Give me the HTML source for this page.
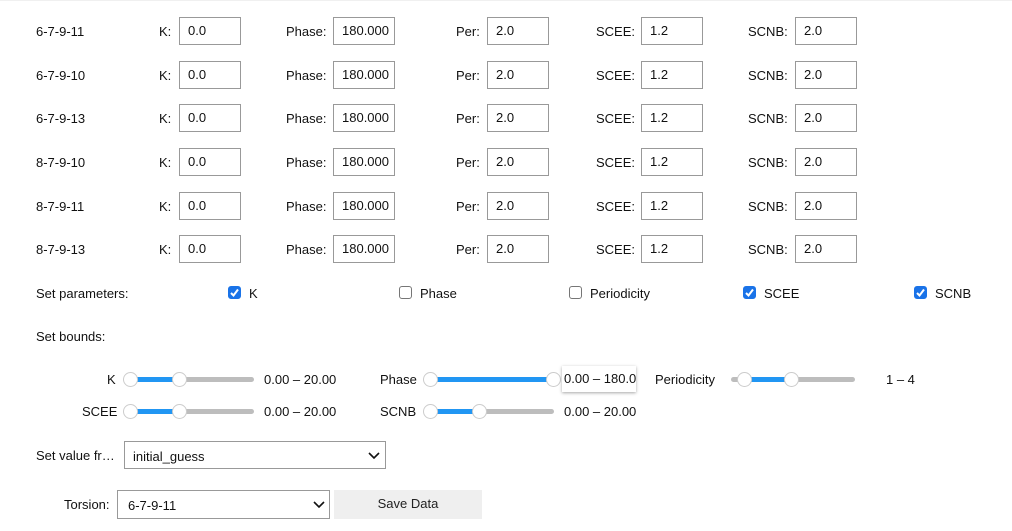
<!DOCTYPE html><html><head><style>
body{margin:0;width:1012px;height:531px;background:#fff;font-family:"Liberation Sans",Arial,sans-serif;font-size:13px;color:#111;position:relative;overflow:hidden}
.a{position:absolute;white-space:nowrap}
.i{position:absolute;width:60px;height:26px;border:1px solid #999;box-sizing:content-box;line-height:26px;padding-left:0;overflow:hidden}
.i span{padding-left:8px}
.t{position:absolute;height:5px;background:#bdbdbd;border-radius:3px}
.f{position:absolute;height:5px;background:#2196f3}
.th{position:absolute;width:15px;height:15px;border-radius:50%;background:#fff;border:1px solid #ccc;box-sizing:border-box}
.cb{position:absolute;width:13px;height:13px;border:1px solid #767676;border-radius:3px;box-sizing:border-box;background:#fff}
.cb.on{background:#1a73e8;border-color:#1a73e8}
.sel{position:absolute;border:1px solid #999;box-sizing:border-box;background:#fff}
</style></head><body>
<div style="position:absolute;left:0;top:0;width:1012px;height:1px;background:#f0f0f0"></div>

<!-- rows -->
<div class="a" style="left:36px;top:24px">6-7-9-11</div>
<div class="a" style="left:36px;top:68px">6-7-9-10</div>
<div class="a" style="left:36px;top:111px">6-7-9-13</div>
<div class="a" style="left:36px;top:155px">8-7-9-10</div>
<div class="a" style="left:36px;top:199px">8-7-9-11</div>
<div class="a" style="left:36px;top:242px">8-7-9-13</div>

<div class="a" style="left:159px;top:24px">K:</div><div class="a" style="left:286px;top:24px">Phase:</div><div class="a" style="left:456px;top:24px">Per:</div><div class="a" style="left:596px;top:24px">SCEE:</div><div class="a" style="left:748px;top:24px">SCNB:</div>
<div class="a" style="left:159px;top:68px">K:</div><div class="a" style="left:286px;top:68px">Phase:</div><div class="a" style="left:456px;top:68px">Per:</div><div class="a" style="left:596px;top:68px">SCEE:</div><div class="a" style="left:748px;top:68px">SCNB:</div>
<div class="a" style="left:159px;top:111px">K:</div><div class="a" style="left:286px;top:111px">Phase:</div><div class="a" style="left:456px;top:111px">Per:</div><div class="a" style="left:596px;top:111px">SCEE:</div><div class="a" style="left:748px;top:111px">SCNB:</div>
<div class="a" style="left:159px;top:155px">K:</div><div class="a" style="left:286px;top:155px">Phase:</div><div class="a" style="left:456px;top:155px">Per:</div><div class="a" style="left:596px;top:155px">SCEE:</div><div class="a" style="left:748px;top:155px">SCNB:</div>
<div class="a" style="left:159px;top:199px">K:</div><div class="a" style="left:286px;top:199px">Phase:</div><div class="a" style="left:456px;top:199px">Per:</div><div class="a" style="left:596px;top:199px">SCEE:</div><div class="a" style="left:748px;top:199px">SCNB:</div>
<div class="a" style="left:159px;top:242px">K:</div><div class="a" style="left:286px;top:242px">Phase:</div><div class="a" style="left:456px;top:242px">Per:</div><div class="a" style="left:596px;top:242px">SCEE:</div><div class="a" style="left:748px;top:242px">SCNB:</div>

<div class="i" style="left:179px;top:17px"><span>0.0</span></div><div class="i" style="left:333px;top:17px"><span>180.000</span></div><div class="i" style="left:487px;top:17px"><span>2.0</span></div><div class="i" style="left:641px;top:17px"><span>1.2</span></div><div class="i" style="left:795px;top:17px"><span>2.0</span></div>
<div class="i" style="left:179px;top:61px"><span>0.0</span></div><div class="i" style="left:333px;top:61px"><span>180.000</span></div><div class="i" style="left:487px;top:61px"><span>2.0</span></div><div class="i" style="left:641px;top:61px"><span>1.2</span></div><div class="i" style="left:795px;top:61px"><span>2.0</span></div>
<div class="i" style="left:179px;top:104px"><span>0.0</span></div><div class="i" style="left:333px;top:104px"><span>180.000</span></div><div class="i" style="left:487px;top:104px"><span>2.0</span></div><div class="i" style="left:641px;top:104px"><span>1.2</span></div><div class="i" style="left:795px;top:104px"><span>2.0</span></div>
<div class="i" style="left:179px;top:148px"><span>0.0</span></div><div class="i" style="left:333px;top:148px"><span>180.000</span></div><div class="i" style="left:487px;top:148px"><span>2.0</span></div><div class="i" style="left:641px;top:148px"><span>1.2</span></div><div class="i" style="left:795px;top:148px"><span>2.0</span></div>
<div class="i" style="left:179px;top:192px"><span>0.0</span></div><div class="i" style="left:333px;top:192px"><span>180.000</span></div><div class="i" style="left:487px;top:192px"><span>2.0</span></div><div class="i" style="left:641px;top:192px"><span>1.2</span></div><div class="i" style="left:795px;top:192px"><span>2.0</span></div>
<div class="i" style="left:179px;top:235px"><span>0.0</span></div><div class="i" style="left:333px;top:235px"><span>180.000</span></div><div class="i" style="left:487px;top:235px"><span>2.0</span></div><div class="i" style="left:641px;top:235px"><span>1.2</span></div><div class="i" style="left:795px;top:235px"><span>2.0</span></div>

<!-- parameters -->
<div class="a" style="left:36px;top:286px">Set parameters:</div>
<div class="cb on" style="left:228px;top:286px"><svg width="11" height="11" style="position:absolute;left:0;top:0"><path d="M2 6 L4.5 8.5 L9 2.5" stroke="#fff" stroke-width="2" fill="none"/></svg></div><div class="a" style="left:249px;top:286px">K</div>
<div class="cb" style="left:399px;top:286px"></div><div class="a" style="left:420px;top:286px">Phase</div>
<div class="cb" style="left:569px;top:286px"></div><div class="a" style="left:590px;top:286px">Periodicity</div>
<div class="cb on" style="left:743px;top:286px"><svg width="11" height="11" style="position:absolute;left:0;top:0"><path d="M2 6 L4.5 8.5 L9 2.5" stroke="#fff" stroke-width="2" fill="none"/></svg></div><div class="a" style="left:764px;top:286px">SCEE</div>
<div class="cb on" style="left:914px;top:286px"><svg width="11" height="11" style="position:absolute;left:0;top:0"><path d="M2 6 L4.5 8.5 L9 2.5" stroke="#fff" stroke-width="2" fill="none"/></svg></div><div class="a" style="left:935px;top:286px">SCNB</div>

<div class="a" style="left:36px;top:329px">Set bounds:</div>

<!-- sliders row 1 -->
<div class="a" style="left:107px;top:372px">K</div>
<div class="t" style="left:130px;top:377px;width:124px"></div><div class="f" style="left:130px;top:377px;width:50px"></div>
<div class="th" style="left:123px;top:372px"></div><div class="th" style="left:172px;top:372px"></div>
<div class="a" style="left:264px;top:372px">0.00 – 20.00</div>

<div class="a" style="left:380px;top:372px">Phase</div>
<div class="t" style="left:430px;top:377px;width:124px"></div><div class="f" style="left:430px;top:377px;width:124px"></div>
<div class="th" style="left:423px;top:372px"></div><div class="th" style="left:546px;top:372px"></div>
<div class="a" style="left:562px;top:366px;width:72px;height:26px;background:#fff;box-shadow:0 1px 3px rgba(0,0,0,.35);line-height:26px;overflow:hidden;padding-left:2px">0.00 – 180.0</div>

<div class="a" style="left:655px;top:372px">Periodicity</div>
<div class="t" style="left:731px;top:377px;width:124px"></div><div class="f" style="left:745px;top:377px;width:47px"></div>
<div class="th" style="left:737px;top:372px"></div><div class="th" style="left:784px;top:372px"></div>
<div class="a" style="left:886px;top:372px">1 – 4</div>

<!-- sliders row 2 -->
<div class="a" style="left:82px;top:404px">SCEE</div>
<div class="t" style="left:130px;top:409px;width:124px"></div><div class="f" style="left:130px;top:409px;width:50px"></div>
<div class="th" style="left:123px;top:404px"></div><div class="th" style="left:172px;top:404px"></div>
<div class="a" style="left:264px;top:404px">0.00 – 20.00</div>

<div class="a" style="left:380px;top:404px">SCNB</div>
<div class="t" style="left:430px;top:409px;width:124px"></div><div class="f" style="left:430px;top:409px;width:50px"></div>
<div class="th" style="left:423px;top:404px"></div><div class="th" style="left:472px;top:404px"></div>
<div class="a" style="left:564px;top:404px">0.00 – 20.00</div>

<!-- selects -->
<div class="a" style="left:36px;top:448px">Set value fr…</div>
<div class="sel" style="left:124px;top:441px;width:262px;height:28px"><span class="a" style="left:8px;top:7px">initial_guess</span><svg class="a" style="left:243px;top:9px" width="12" height="9"><path d="M1 2 L6 7 L11 2" stroke="#111" stroke-width="1.6" fill="none"/></svg></div>

<div class="a" style="left:64px;top:497px">Torsion:</div>
<div class="sel" style="left:117px;top:490px;width:213px;height:29px"><span class="a" style="left:10px;top:7px">6-7-9-11</span><svg class="a" style="left:195px;top:9px" width="12" height="9"><path d="M1 2 L6 7 L11 2" stroke="#111" stroke-width="1.6" fill="none"/></svg></div>
<div class="a" style="left:334px;top:490px;width:148px;height:29px;background:#efefef;text-align:center;line-height:27px;color:#222">Save Data</div>
</body></html>
